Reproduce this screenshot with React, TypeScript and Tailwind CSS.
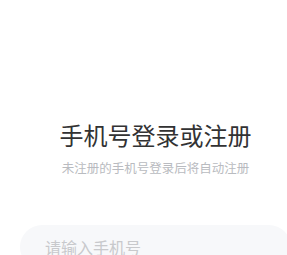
import React from "react";

export default function App() {
  return (
    <div className="w-[287px] h-[255px] overflow-hidden bg-white">
      <div
        className="w-[311px] px-5 pt-[119px] flex flex-col items-center"
        style={{ fontFamily: '"Noto Sans CJK SC", "Noto Sans", sans-serif' }}
      >
        {/* 标题 */}
        <h1 className="text-[24px] leading-[32px] text-[#323233] font-normal">手机号登录或注册</h1>
        <p className="mt-[8px] text-[12.5px] leading-[18px] text-[#b9bbc0]">未注册的手机号登录后将自动注册</p>

        {/* 手机号输入 */}
        <div className="mt-[48px] w-full h-[44px] rounded-[22px] bg-[#f7f8fa] flex items-center pl-[25px]">
          <input
            type="tel"
            placeholder="请输入手机号"
            className="w-full bg-transparent outline-none text-[16px] leading-[22px] text-[#323233] placeholder:text-[#c8c9cc]"
          />
        </div>
      </div>
    </div>
  );
}
